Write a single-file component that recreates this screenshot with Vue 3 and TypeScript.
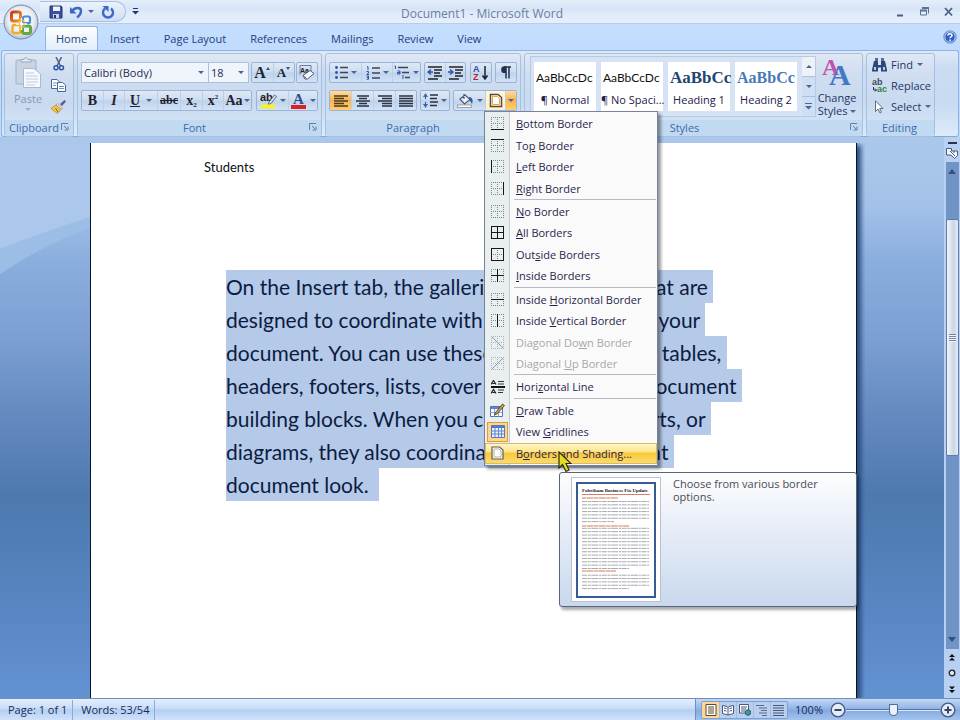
<script setup lang="ts">
import { ref } from 'vue'

type BorderLine = 'top' | 'bottom' | 'left' | 'right' | 'h' | 'v' | 'down' | 'up'

interface MenuItem {
  before: string
  key: string
  after: string
  icon: 'grid' | 'rule' | 'draw' | 'view' | 'page'
  lines?: BorderLine[]
  disabled?: boolean
  checked?: boolean
  active?: boolean
  separated?: boolean
}

const tabs = ['Home', 'Insert', 'Page Layout', 'References', 'Mailings', 'Review', 'View']
const activeTab = ref('Home')

const menu: MenuItem[] = [
  { before: '', key: 'B', after: 'ottom Border', icon: 'grid', lines: ['bottom'] },
  { before: 'To', key: 'p', after: ' Border', icon: 'grid', lines: ['top'] },
  { before: '', key: 'L', after: 'eft Border', icon: 'grid', lines: ['left'] },
  { before: '', key: 'R', after: 'ight Border', icon: 'grid', lines: ['right'] },
  { before: '', key: 'N', after: 'o Border', icon: 'grid', lines: [], separated: true },
  { before: '', key: 'A', after: 'll Borders', icon: 'grid', lines: ['top', 'bottom', 'left', 'right', 'h', 'v'] },
  { before: 'Out', key: 's', after: 'ide Borders', icon: 'grid', lines: ['top', 'bottom', 'left', 'right'] },
  { before: '', key: 'I', after: 'nside Borders', icon: 'grid', lines: ['h', 'v'] },
  { before: 'Inside ', key: 'H', after: 'orizontal Border', icon: 'grid', lines: ['h'], separated: true },
  { before: 'Inside ', key: 'V', after: 'ertical Border', icon: 'grid', lines: ['v'] },
  { before: 'Diagonal Do', key: 'w', after: 'n Border', icon: 'grid', lines: ['down'], disabled: true },
  { before: 'Diagonal ', key: 'U', after: 'p Border', icon: 'grid', lines: ['up'], disabled: true },
  { before: 'Hori', key: 'z', after: 'ontal Line', icon: 'rule', separated: true },
  { before: '', key: 'D', after: 'raw Table', icon: 'draw', separated: true },
  { before: 'View ', key: 'G', after: 'ridlines', icon: 'view', checked: true },
  { before: 'B', key: 'o', after: 'rders and Shading...', icon: 'page', active: true },
]

const linePaths: Record<BorderLine, string> = {
  top: 'M0 .5H13',
  bottom: 'M0 12.5H13',
  left: 'M.5 0V13',
  right: 'M12.5 0V13',
  h: 'M0 6.5H13',
  v: 'M6.5 0V13',
  down: 'M1 1L12 12',
  up: 'M1 12L12 1',
}

const styles = [
  { sample: 'AaBbCcDc', name: '¶ Normal', kind: 'body' },
  { sample: 'AaBbCcDc', name: '¶ No Spaci...', kind: 'body' },
  { sample: 'AaBbCc', name: 'Heading 1', kind: 'h1' },
  { sample: 'AaBbCc', name: 'Heading 2', kind: 'h2' },
]

const lines = [
  'On the Insert tab, the galleries include items that are',
  'designed to coordinate with the overall look of your',
  'document. You can use these galleries to insert tables,',
  'headers, footers, lists, cover pages, and other document',
  'building blocks. When you create pictures, charts, or',
  'diagrams, they also coordinate with your current',
  'document look. ',
]

const thumbRows = Array.from({ length: 27 }, (_, i) => i).filter((i) => i !== 7 && i !== 21)
const font = ref('Calibri (Body)')
const size = ref('18')
const zoom = ref(50)
</script>

<template>
  <div class="word">
    <header class="titlebar">
      <div class="qat">
        <button class="plain" aria-label="Save">
          <svg width="14" height="14" viewBox="0 0 14 14"><path d="M1 1H12L13 2V13H1Z" fill="#3a4fa3" stroke="#27356f" /><path d="M4 1.500H11V6H4Z" fill="#eef3ff" /><path d="M4 9H10V13H4Z" fill="#c9d4ef" /><path d="M5 10H7V13H5Z" fill="#27356f" /></svg>
        </button>
        <button class="plain" aria-label="Undo">
          <svg width="13" height="14" viewBox="0 0 13 14"><path d="M2 6C5 2 11 2 11 6C11 9 9 11 7 12.500" fill="none" stroke="#3f68c4" stroke-width="2.400" /><path d="M0 2V8.500H6.500Z" fill="#3f68c4" /></svg>
        </button>
        <i class="arrow" />
        <button class="plain" aria-label="Repeat">
          <svg width="14" height="14" viewBox="0 0 14 14"><path d="M4 3.500A5 5 0 1 0 10 3.500" fill="none" stroke="#3f68c4" stroke-width="2.400" /><path d="M1.500 1H7.500V7Z" fill="#3f68c4" /></svg>
        </button>
      </div>
      <button class="plain more" aria-label="Customize toolbar">
        <svg width="7" height="7" viewBox="0 0 7 7"><path d="M1 .5H6" stroke="#223a66" /><path d="M0 3H7L3.500 6.500Z" fill="#223a66" /></svg>
      </button>
      <h1>Document1 - Microsoft Word</h1>
      <div class="window-buttons">
        <button class="plain" aria-label="Minimize"><svg width="11" height="11" viewBox="0 0 11 11"><path d="M2 9.500H8" stroke="#4c5f80" stroke-width="2" /></svg></button>
        <button class="plain" aria-label="Restore"><svg width="11" height="11" viewBox="0 0 11 11"><path d="M3 2.500H9.500V7.500M1.500 4.500H7.500V9H1.500Z" fill="none" stroke="#5d7192" /><path d="M1 4.500H8M3 2H10" stroke="#5d7192" stroke-width="2" /></svg></button>
        <button class="plain" aria-label="Close"><svg width="11" height="11" viewBox="0 0 11 11"><path d="M2 2L9 9.500M9 2L2 9.500" stroke="#4c5f80" stroke-width="1.800" /></svg></button>
      </div>
    </header>

    <button class="orb" aria-label="Office menu">
      <svg width="36" height="38" viewBox="0 0 36 38">
        <defs>
          <radialGradient id="orb" cx=".5" cy=".45" r=".55"><stop offset="0" stop-color="#fff" /><stop offset=".7" stop-color="#e9edf3" /><stop offset="1" stop-color="#aebbd0" /></radialGradient>
          <linearGradient id="orbRed" x2="1" y2="1"><stop offset="0" stop-color="#c93b12" /><stop offset="1" stop-color="#f29a2c" /></linearGradient>
        </defs>
        <circle cx="18" cy="19" r="17" fill="url(#orb)" stroke="#7688a8" />
        <g fill="none" stroke-width="3">
          <rect x="8.500" y="9" width="9" height="9" rx="2" stroke="url(#orbRed)" />
          <rect x="20" y="13.500" width="7" height="6.500" rx="1.500" stroke="#4b8fd0" stroke-width="2.200" />
          <rect x="9.500" y="22" width="8" height="8" rx="2" stroke="#f0ad27" stroke-width="2.400" />
          <rect x="19.500" y="23" width="8" height="7.500" rx="2" stroke="#62a744" />
          <path d="M18.500 15V27M13 21H24" stroke="#fff" stroke-width="1.300" />
          <path d="M16.500 17.500H21V24H16.500Z" stroke="#f2c04a" stroke-width="1" />
        </g>
      </svg>
    </button>

    <nav class="tabs">
      <button v-for="t in tabs" :key="t" :class="['tab', { on: t === activeTab }]" @click="activeTab = t">{{ t }}</button>
      <button class="plain help" aria-label="Help">
        <svg width="14" height="14" viewBox="0 0 14 14"><circle cx="7" cy="7" r="6.300" fill="#2b5fc4" stroke="#8aa7d8" /><circle cx="7" cy="7" r="5.200" fill="none" stroke="#dce8fb" stroke-width=".8" /><path d="M5 5.500C5 3.300 9 3.300 9 5.400C9 6.800 7 6.700 7 8.300M7 9.500V11" fill="none" stroke="#fff" stroke-width="1.500" /></svg>
      </button>
    </nav>

    <section class="ribbon">
      <div class="group">
        <div class="content clip">
          <button class="plain paste" disabled>
            <svg width="27" height="32" viewBox="0 0 27 32"><rect x="1" y="3" width="20" height="24" rx="1" fill="#c9d4e3" stroke="#a3b2c8" /><path d="M6 5V2.500H9C9 0 13 0 13 2.500H16V5Z" fill="#e3e9f1" stroke="#98a8bf" /><path d="M8.500 11.500H19L25.500 17V30.500H8.500Z" fill="#f6f9fd" stroke="#a9b8cd" /><path d="M11 16H19M11 19H23M11 22H23M11 25H23M11 28H20" stroke="#c0ccdd" /></svg>
            <span>Paste</span>
            <i class="arrow dim" />
          </button>
          <div class="clip-side">
            <button class="plain" aria-label="Cut"><svg width="14" height="14" viewBox="0 0 14 14"><path d="M4 0L8.500 9M9.500 0L5 9" stroke="#4a5f86" stroke-width="1.500" /><circle cx="4" cy="10.800" r="2" fill="none" stroke="#2b56a8" stroke-width="1.500" /><circle cx="9.500" cy="10.800" r="2" fill="none" stroke="#2b56a8" stroke-width="1.500" /></svg></button>
            <button class="plain" aria-label="Copy"><svg width="15" height="13" viewBox="0 0 15 13"><path d="M.5 .5H6L8.500 3V9.500H.5Z" fill="#fff" stroke="#48659c" /><path d="M6.500 3.500H11.500L14.500 6V12.500H6.500Z" fill="#fff" stroke="#48659c" /><path d="M2 4H6M2 6.500H5M8 7.500H13M8 9.500H13" stroke="#6f8fc5" /></svg></button>
            <button class="plain" aria-label="Format Painter"><svg width="15" height="14" viewBox="0 0 15 14"><path d="M9 4L13.500 0L15 1.500L11 6Z" fill="#5f5a8f" /><path d="M6.500 3.500L11.500 8L10 9.500L5 5Z" fill="#e9e9ee" stroke="#777" stroke-width=".6" /><path d="M5 5L10 9.500L6.500 13.500L0 8.500Z" fill="#f2cb4c" stroke="#b78a22" stroke-width=".8" /><path d="M4.500 8L7 12" stroke="#8a661b" /></svg></button>
          </div>
        </div>
        <div class="caption"><span>Clipboard</span><svg class="launch" width="8" height="8" viewBox="0 0 8 8"><path d="M.5 7V.5H7M3 3L6 6M7 3.500V7H3.500" fill="none" stroke="#5f7ea8" /></svg></div>
      </div>

      <div class="group">
        <div class="content rows">
          <div class="row">
            <div class="combo">
              <input v-model="font" class="font-box" aria-label="Font" /><button class="plain drop" aria-label="Font list"><i class="arrow" /></button>
              <input v-model="size" class="size-box" aria-label="Font size" /><button class="plain drop" aria-label="Size list"><i class="arrow" /></button>
            </div>
            <div class="box">
              <button class="serif big w21" aria-label="Grow font">A<i class="mark up" /></button>
              <button class="serif w21 mid" aria-label="Shrink font">A<i class="mark" /></button>
            </div>
            <div class="box">
              <button class="w20" aria-label="Clear formatting"><svg width="16" height="15" viewBox="0 0 16 15"><text x="1" y="8" class="tiny">Aa</text><path d="M1 9.500V.5H12V6" fill="none" stroke="#6a7da0" /><path d="M4 10.500L11 5.500L15 8.500L8.500 14H6Z" fill="#f6f7fb" stroke="#4d5f80" /><path d="M4 10.500L7.500 13.500" stroke="#4d5f80" /></svg></button>
            </div>
          </div>
          <div class="row">
            <div class="box">
              <button class="serif w21 strong">B</button>
              <button class="serif w21 italic">I</button>
              <button class="serif w33 under"><u>U</u><i class="arrow" /></button>
              <button class="serif w23 strike"><s>abc</s></button>
              <button class="serif w22 script">x<small class="low">2</small></button>
              <button class="serif w21 script">x<small class="high">2</small></button>
              <button class="serif w28 case">Aa<i class="arrow" /></button>
            </div>
            <div class="box">
              <button class="w31" aria-label="Highlight"><svg width="17" height="17" viewBox="0 0 17 17"><text x="0" y="9" class="ab">ab</text><path d="M9 10L14.500 3L16.500 4.500L11 11.500L8 12.500Z" fill="#d9dde6" stroke="#54617c" stroke-width=".9" /><rect x="1" y="12.500" width="14" height="4" fill="#f8f22a" /></svg><i class="arrow" /></button>
              <button class="w29" aria-label="Font colour"><svg width="16" height="17" viewBox="0 0 16 17"><text x="2" y="12" class="big-a">A</text><rect x="0" y="13" width="15" height="4" fill="#df1f26" /></svg><i class="arrow" /></button>
            </div>
          </div>
        </div>
        <div class="caption"><span>Font</span><svg class="launch" width="8" height="8" viewBox="0 0 8 8"><path d="M.5 7V.5H7M3 3L6 6M7 3.500V7H3.500" fill="none" stroke="#5f7ea8" /></svg></div>
      </div>

      <div class="group">
        <div class="content rows">
          <div class="row">
            <div class="box">
              <button class="w31" aria-label="Bullets"><svg width="13" height="13" viewBox="0 0 13 13"><path d="M5 1.500H13M5 6.500H13M5 11.500H13" stroke="#3d4658" stroke-width="1.400" /><g fill="#2c50a5"><circle cx="1.500" cy="1.500" r="1.400" /><circle cx="1.500" cy="6.500" r="1.400" /><circle cx="1.500" cy="11.500" r="1.400" /></g></svg><i class="arrow" /></button>
              <button class="w31" aria-label="Numbering"><svg width="14" height="14" viewBox="0 0 14 14"><path d="M6 2H14M6 7H14M6 12H14" stroke="#3d4658" stroke-width="1.400" /><path d="M1 .8H2V4M.5 5.500H2.500V7L.8 8.500H3M.5 10H2.500V13.200H.5M1 11.500H2.500" fill="none" stroke="#2c50a5" /></svg><i class="arrow" /></button>
              <button class="w28" aria-label="Multilevel list"><svg width="16" height="15" viewBox="0 0 16 15"><path d="M4 2.500H14M8 7.500H15M11 12.500H16" stroke="#3d4658" stroke-width="1.400" /><path d="M.5 1H1.500V4M3.500 6H6V9H3.500V7.500H6M9 10V14" fill="none" stroke="#2c50a5" /></svg><i class="arrow" /></button>
            </div>
            <div class="box">
              <button class="w20" aria-label="Decrease indent"><svg width="16" height="14" viewBox="0 0 16 14"><path d="M1 1H15M7 4H15M7 7H13M7 10H15M1 13H11" stroke="#1d222c" stroke-width="1.600" /><path d="M6 6H2M4 3.500L1 6L4 8.500" fill="none" stroke="#2c50a5" stroke-width="1.400" /></svg></button>
              <button class="w20" aria-label="Increase indent"><svg width="16" height="14" viewBox="0 0 16 14"><path d="M1 1H15M7 4H15M7 7H13M7 10H15M1 13H11" stroke="#1d222c" stroke-width="1.600" /><path d="M0 6H4M2 3.500L5 6L2 8.500" fill="none" stroke="#2c50a5" stroke-width="1.400" /></svg></button>
            </div>
            <div class="box">
              <button class="w20" aria-label="Sort"><svg width="16" height="17" viewBox="0 0 16 17"><text x="0" y="8" class="sort-a">A</text><text x="0" y="16" class="sort-z">Z</text><path d="M12 2V15M9.500 11.500L12 15L14.500 11.500" fill="none" stroke="#1d222c" stroke-width="1.500" /></svg></button>
            </div>
            <div class="box">
              <button class="w20" aria-label="Show marks"><svg width="12" height="13" viewBox="0 0 12 13"><path d="M6 .5V12.500M9 .5V12.500M4 1H11" stroke="#22304c" stroke-width="1.500" /><path d="M6 .3H4.500A3.200 3.200 0 0 0 4.500 7H6Z" fill="#22304c" /></svg></button>
            </div>
          </div>
          <div class="row">
            <div class="box">
              <button class="w21 hot" aria-label="Align left"><svg width="14" height="12" viewBox="0 0 14 12"><path d="M0 1H14M0 3.500H10M0 6H14M0 8.500H10M0 11H14" stroke="#4a3a1c" stroke-width="1.500" /></svg></button>
              <button class="w22" aria-label="Center"><svg width="14" height="12" viewBox="0 0 14 12"><path d="M1 1H13M3 3.500H11M0 6H14M3 8.500H11M1 11H13" stroke="#2b3242" stroke-width="1.500" /></svg></button>
              <button class="w22" aria-label="Align right"><svg width="14" height="12" viewBox="0 0 14 12"><path d="M0 1H14M4 3.500H14M0 6H14M4 8.500H14M4 11H14" stroke="#2b3242" stroke-width="1.500" /></svg></button>
              <button class="w21" aria-label="Justify"><svg width="14" height="12" viewBox="0 0 14 12"><path d="M0 1H14M0 3.500H14M0 6H14M0 8.500H14M0 11H14" stroke="#2b3242" stroke-width="1.500" /></svg></button>
            </div>
            <div class="box">
              <button class="w28" aria-label="Line spacing"><svg width="15" height="15" viewBox="0 0 15 15"><path d="M7 2H15M7 5.500H14M7 9H15M7 12.500H14" stroke="#2b3242" stroke-width="1.500" /><path d="M2.500 1V14" stroke="#2c50a5" stroke-dasharray="5 3" /><path d="M0 4L2.500 0L5 4ZM0 11L2.500 15L5 11Z" fill="#3d66b4" /></svg><i class="arrow" /></button>
            </div>
            <div class="box">
              <button class="w31" aria-label="Shading"><svg width="17" height="15" viewBox="0 0 17 15"><path d="M7 1V6M3 6L8 2L13 6.500L7.500 11Z" fill="#eef3fb" stroke="#48597a" stroke-width="1.200" /><path d="M12 4C15 4 16.500 7 15 11L12.500 7Z" fill="#33589e" /><rect x=".5" y="12" width="14" height="2.500" fill="#fff" stroke="#8c8c8c" stroke-width=".8" /></svg><i class="arrow" /></button>
              <button class="w20 warm" aria-label="Borders"><svg width="14" height="15" viewBox="0 0 14 15"><path d="M1.500 1.500H9L12.500 4.500V13.500H1.500Z" fill="#fff" stroke="#5b4a2f" stroke-width="1.500" /><path d="M3.500 3.500H8.500L10.500 5.500V11.500H3.500Z" fill="none" stroke="#e6a640" /></svg></button>
              <button class="w11 hot" aria-label="Border options"><i class="arrow" /></button>
            </div>
          </div>
        </div>
        <div class="caption"><span class="shifted">Paragraph</span></div>
      </div>

      <div class="group">
        <div class="content styles">
          <div class="gallery">
            <button v-for="(s, i) in styles" :key="i" class="style-card">
              <span :class="['sample', s.kind]">{{ s.sample }}</span>
              <span class="style-name">{{ s.name }}</span>
            </button>
            <div class="gallery-nav">
              <button aria-label="Previous styles" class="off"><i class="arrow flip" /></button>
              <button aria-label="Next styles"><i class="arrow" /></button>
              <button aria-label="All styles"><svg width="7" height="7" viewBox="0 0 7 7"><path d="M0 .5H7" stroke="#4b6591" /><path d="M0 3H7L3.500 6.500Z" fill="#4b6591" /></svg></button>
            </div>
          </div>
          <button class="plain change">
            <svg width="30" height="32" viewBox="0 0 30 32"><text x="0" y="19" class="a-pink">A</text><text x="7" y="29" class="a-blue">A</text></svg>
            <span>Change</span>
            <span>Styles <i class="arrow" /></span>
          </button>
        </div>
        <div class="caption"><span class="shifted-less">Styles</span><svg class="launch" width="8" height="8" viewBox="0 0 8 8"><path d="M.5 7V.5H7M3 3L6 6M7 3.500V7H3.500" fill="none" stroke="#5f7ea8" /></svg></div>
      </div>

      <div class="group">
        <div class="content editing">
          <button class="plain"><svg width="15" height="14" viewBox="0 0 15 14"><path d="M2 3H6V7H9V3H13L15 12V13.500H9V9.500H6V13.500H0V12Z" fill="#2b4778" /><path d="M3 0H6V3H3ZM9 0H12V3H9Z" fill="#4f6ea3" /><path d="M2 9H4V12H2ZM11 9H13V12H11Z" fill="#b9cbe8" /></svg><span>Find</span><i class="arrow" /></button>
          <button class="plain"><svg width="15" height="15" viewBox="0 0 15 15"><text x="0" y="7" class="rep">ab</text><text x="5" y="14" class="rep green">ac</text><path d="M1.500 9V12H4.500M3 10.500L4.500 12L3 13.500" fill="none" stroke="#223a66" /></svg><span>Replace</span></button>
          <button class="plain"><svg width="15" height="14" viewBox="0 0 15 14"><path d="M3.500 .8V11.500L6 9L8 13L9.500 12.200L7.700 8.500H11Z" fill="#fff" stroke="#5e6c85" /></svg><span>Select</span><i class="arrow" /></button>
        </div>
        <div class="caption"><span>Editing</span></div>
      </div>
    </section>

    <main class="workspace">
      <svg class="swoosh" viewBox="0 0 90 140" preserveAspectRatio="none"><path d="M0 0H90V91Q45 107 0 137Z" fill="#9bbde6" /><path d="M0 0H90V80Q40 96 0 112Z" fill="#abc8ec" /></svg>
      <article class="page">
        <p class="header-text">Students</p>
        <p class="body-text">
          <span v-for="l in lines" :key="l" class="line"><mark>{{ l }}&nbsp;</mark></span>
        </p>
      </article>
      <aside class="scroll">
        <span class="split" />
        <button class="plain" aria-label="Ruler"><svg width="12" height="12" viewBox="0 0 12 12"><path d="M.5 1.500H5.500V4H11.500V8.500L8.500 11.500L5 8H.5Z" fill="#f5f8fd" stroke="#4a5c7d" /><path d="M4 4L9 9M8 4V6" stroke="#4a5c7d" /></svg></button>
        <div class="track">
          <button class="plain end" aria-label="Scroll up"><i class="arrow flip" /></button>
          <div class="handle"><span /></div>
          <button class="plain end" aria-label="Scroll down"><i class="arrow" /></button>
        </div>
        <button class="plain jump" aria-label="Previous page"><svg width="6" height="7" viewBox="0 0 6 7"><path d="M0 3L3 0L6 3ZM0 6.500L3 3.500L6 6.500Z" fill="#111" /></svg></button>
        <button class="plain jump" aria-label="Browse object"><svg width="8" height="8" viewBox="0 0 8 8"><circle cx="4" cy="4" r="2.800" fill="#dfe6f0" stroke="#222" stroke-width="1.300" /></svg></button>
        <button class="plain jump" aria-label="Next page"><svg width="6" height="7" viewBox="0 0 6 7"><path d="M0 .5H6L3 3.500ZM0 4H6L3 7Z" fill="#111" /></svg></button>
      </aside>
    </main>

    <footer class="status">
      <span class="cell">Page: 1 of 1</span>
      <span class="cell">Words: 53/54</span>
      <div class="right">
        <div class="views">
          <button class="sel" aria-label="Print layout"><svg width="12" height="12" viewBox="0 0 12 12"><path d="M1 .5H11V11.500H1Z" fill="#fff" stroke="#5b4a2f" /><path d="M3 3H9M3 5H9M3 7H9M3 9H9" stroke="#5b4a2f" /></svg></button>
          <button aria-label="Reading"><svg width="12" height="12" viewBox="0 0 12 12"><path d="M.5 1.500L5 2.500L6 3.500L7 2.500L11.500 1.500V9.500L6 11L.5 9.500Z" fill="#fff" stroke="#49577a" /><path d="M6 3V11M2 4L4.500 4.500M2 6.500L4.500 7M7.500 4.500L10 4M7.500 7L10 6.500" stroke="#49577a" /></svg></button>
          <button aria-label="Web layout"><svg width="12" height="12" viewBox="0 0 12 12"><path d="M.5 .5H9.500V9H.5Z" fill="#fff" stroke="#49577a" /><path d="M2 3H8M2 5H7M2 7H6" stroke="#49577a" /><circle cx="9" cy="8.500" r="2.800" fill="#3f9a8a" stroke="#2c5f8c" /></svg></button>
          <button aria-label="Outline"><svg width="12" height="12" viewBox="0 0 12 12"><path d="M0 1.500H8M3 4H11M5 6.500H11M3 9H11M6 11.500H11" stroke="#5d6b86" /></svg></button>
          <button aria-label="Draft"><svg width="12" height="12" viewBox="0 0 12 12"><path d="M0 1.500H11M0 4H11M0 6.500H11M0 9H11M0 11.500H11" stroke="#49577a" /></svg></button>
        </div>
        <span class="pct">100%</span>
        <button class="plain" aria-label="Zoom out"><svg width="16" height="16" viewBox="0 0 16 16"><circle cx="8" cy="8" r="6.800" fill="#e4edf9" stroke="#44597f" stroke-width="1.300" /><path d="M4.500 8H11.500" stroke="#33476b" stroke-width="2" /></svg></button>
        <input v-model="zoom" type="range" min="0" max="100" aria-label="Zoom" />
        <button class="plain" aria-label="Zoom in"><svg width="16" height="16" viewBox="0 0 16 16"><circle cx="8" cy="8" r="6.800" fill="#e4edf9" stroke="#44597f" stroke-width="1.300" /><path d="M4.500 8H11.500M8 4.500V11.500" stroke="#33476b" stroke-width="2" /></svg></button>
      </div>
    </footer>

    <div class="menu">
      <template v-for="m in menu" :key="m.before + m.key + m.after">
        <hr v-if="m.separated" />
        <button :class="['entry', { active: m.active }]" :disabled="m.disabled">
          <span :class="['glyph', { checked: m.checked }]">
            <svg v-if="m.icon === 'grid'" width="13" height="13" viewBox="0 0 13 13" shape-rendering="crispEdges">
              <path d="M0 .5H13M0 12.500H13M0 6.500H13M.5 0V13M6.500 0V13M12.500 0V13" fill="none" :stroke="m.disabled ? '#a9b2c0' : '#7d8694'" stroke-dasharray="1 1" />
              <path v-for="l in m.lines" :key="l" :d="linePaths[l]" :stroke="m.disabled ? '#8f9aac' : '#15181e'" />
            </svg>
            <svg v-else-if="m.icon === 'rule'" width="14" height="14" viewBox="0 0 14 14"><path d="M0 7H14" stroke="#111" stroke-width="2" /><path d="M0 4.500L2.500 .5L5 4.500M1.500 3.500H4M0 13.500L2.500 9.500L5 13.500M1.500 12.500H4" fill="none" stroke="#222" stroke-width="1.200" /><path d="M7 1.500H13M7 4H13M7 10H13M7 12.500H12" stroke="#333" /></svg>
            <svg v-else-if="m.icon === 'draw'" width="15" height="15" viewBox="0 0 15 15"><path d="M.5 3.500H12.500V13.500H.5Z" fill="#fff" stroke="#4e74b8" /><path d="M1 4H12V6H1Z" fill="#5c85cc" /><path d="M.5 9.500H12.500M4.500 6V13.500M8.500 6V13.500" stroke="#8aa8da" /><path d="M5 10L12.500 1L14.500 2.500L7 11L4.500 12Z" fill="#c99a5c" stroke="#4b3519" stroke-width=".8" /></svg>
            <svg v-else-if="m.icon === 'view'" width="14" height="13" viewBox="0 0 14 13"><path d="M.5 .5H13.500V12.500H.5Z" fill="#eaf1fc" stroke="#5379bd" /><path d="M1 1H13V3H1Z" fill="#4c78c4" /><path d="M.5 6H13.500M.5 9H13.500M4 .5V12.500M7.500 .5V12.500M10.500 .5V12.500" stroke="#5d86cd" /></svg>
            <svg v-else width="13" height="14" viewBox="0 0 13 14"><path d="M1 1H8.500L12 4V13H1Z" fill="#fff" stroke="#5f5c55" stroke-width="1.200" /><path d="M3 3H8L10 5V11H3Z" fill="none" stroke="#b7b09f" /></svg>
          </span>
          <span class="text">{{ m.before }}<u>{{ m.key }}</u>{{ m.after }}</span>
        </button>
      </template>
    </div>

    <div class="tip" role="tooltip">
      <svg width="90" height="125" viewBox="0 0 90 125">
        <rect x=".5" y=".5" width="89" height="124" fill="#fff" stroke="#b9c2d0" />
        <rect x="6" y="6" width="78" height="114" fill="#fff" stroke="#3a5a92" stroke-width="2" />
        <text x="11" y="15" class="thumb-title">Fabrikam Business Fix Update</text>
        <path d="M11 17.500H79" stroke="#c0604e" stroke-width=".8" />
        <path d="M11 21H47M11 49H58M11 94H45" stroke="#e3a78c" stroke-width="1.300" stroke-dasharray="4 .5 7 .6" />
        <path v-for="r in thumbRows" :key="r" :d="`M11 ${24.5 + r * 3.35}H${r === 6 ? 43 : r === 20 ? 58 : r === 26 ? 58 : 78}`" stroke="#a6a9b0" stroke-dasharray="5 .8 3 .6 7 .8 2 .6" />
      </svg>
      <p>Choose from various border options.</p>
    </div>

    <svg class="pointer" width="14" height="22" viewBox="0 0 14 22"><path d="M1 1V17L4.500 13.500L8 20.500L11 19L8 12.500H13Z" fill="#e3dc22" stroke="#2a2a10" stroke-width="1.200" /></svg>
  </div>
</template>

<style>
body {
  margin: 0;
  overflow: hidden;
}
</style>

<style scoped>
* {
  box-sizing: border-box;
}

.word {
  position: relative;
  display: flex;
  flex-direction: column;
  height: 100vh;
  font: 11px/13px "Open Sans", "Noto Sans", sans-serif;
  color: #1f3566;
  background: #bfdbff;
}

button {
  font: inherit;
  color: inherit;
  margin: 0;
  padding: 0;
  border: 0;
  background: none;
  white-space: nowrap;
}

.plain {
  display: flex;
  align-items: center;
  justify-content: center;
}

svg {
  display: block;
  flex: none;
}

.arrow {
  display: inline-block;
  flex: none;
  width: 0;
  height: 0;
  border: 3px solid transparent;
  border-top-color: #4b6591;
  border-bottom-width: 0;
}

.arrow.dim {
  border-top-color: #a4afc0;
}

.arrow.flip {
  transform: rotate(180deg);
}

.titlebar {
  display: flex;
  align-items: center;
  height: 24px;
  padding: 0 5px 0 40px;
  background: linear-gradient(#e4eefb, #d6e4f6 40%, #dfeafa 55%, #e6f0fc);
  border-bottom: 1px solid #b7cdec;
}

.qat {
  display: flex;
  align-items: center;
  gap: 7px;
  height: 21px;
  width: 86px;
  padding-left: 9px;
  border: 1px solid #a9bfdf;
  border-left: 0;
  border-radius: 0 11px 11px 0;
  background: linear-gradient(#eaf2fd, #cfdff5);
}

.qat .arrow {
  margin-left: -2px;
}

.more {
  margin-left: 5px;
  width: 8px;
}

h1 {
  flex: 1;
  margin: 0;
  padding: 4px 70px 0 0;
  text-align: center;
  font-size: 12px;
  line-height: 16px;
  font-weight: 400;
  color: #6b7d9e;
}

.window-buttons {
  display: flex;
  gap: 13px;
  padding-right: 1px;
}

.orb {
  position: absolute;
  left: 3px;
  top: 3px;
  z-index: 2;
}

.tabs {
  display: flex;
  align-items: flex-end;
  height: 26px;
  padding: 0 3px 0 45px;
  background: linear-gradient(#c6dffd, #bfdbff);
}

.tab {
  height: 24px;
  padding: 0 11px;
  color: #20427c;
  border: 1px solid transparent;
  border-bottom: 0;
}

.tab.on {
  padding: 0 10px;
  background: linear-gradient(#fdfeff, #e3edfa);
  border-color: #8db2e3;
  border-radius: 3px 3px 0 0;
}

.help {
  margin: 0 0 6px auto;
}

.ribbon {
  display: grid;
  grid-template-columns: 70px 245px 196px 1fr 69px;
  gap: 3px;
  height: 87px;
  margin: 0 1px;
  padding: 2px 23px 3px 2px;
  border: 1px solid #8db2e3;
  border-bottom-color: #7fb0c9;
  border-radius: 3px;
  background: linear-gradient(#dfe9f6, #cbdcf2 20%, #c7daf1 60%, #dcebfb);
}

.group {
  display: flex;
  flex-direction: column;
  min-width: 0;
  border: 1px solid #a6c0e0;
  border-radius: 3px;
  background: linear-gradient(#dfe8f4, #cfddf0 25%, #c9daf0 60%, #dae8f8);
}

.content {
  flex: 1;
  min-height: 0;
}

.caption {
  display: flex;
  align-items: center;
  height: 16px;
  padding: 0 4px 2px 2px;
  background: #c2d9f2;
  color: #3e6aaa;
}

.caption span {
  flex: 1;
  text-align: center;
}

.caption .shifted {
  padding-right: 18px;
}

.caption .shifted-less {
  padding-right: 8px;
}

.clip {
  display: flex;
  justify-content: space-between;
  padding: 3px 7px 0 9px;
}

.paste {
  flex-direction: column;
  justify-content: flex-start;
  gap: 3px;
  color: #8d98aa;
}

.clip-side {
  display: flex;
  flex-direction: column;
  gap: 8px;
}

.rows {
  display: flex;
  flex-direction: column;
  gap: 7px;
  padding: 8px 3px 0;
}

.row {
  display: flex;
  justify-content: space-between;
  height: 21px;
}

.box {
  display: flex;
  border: 1px solid #9ab4d8;
  border-radius: 2px;
  background: linear-gradient(#dfe9f6, #ccdcf0 48%, #bfd3ec 52%, #d3e2f5);
}

.box button {
  position: relative;
  display: flex;
  align-items: center;
  justify-content: center;
  gap: 3px;
  color: #1c2333;
}

.box button + button {
  border-left: 1px solid #bccfe8;
}

.w11 { width: 11px; }
.w20 { width: 20px; }
.w21 { width: 21px; }
.w22 { width: 22px; }
.w23 { width: 23px; }
.w28 { width: 28px; }
.w29 { width: 29px; }
.w31 { width: 31px; }
.w33 { width: 33px; }

.box .serif {
  font-family: "Liberation Serif", serif;
  font-weight: 700;
  font-size: 14px;
}

.box .big {
  font-size: 16px;
}

.box .mid {
  font-size: 13px;
}

.box .italic {
  font-style: italic;
}

.box .strike {
  font-size: 12px;
}

.box .script {
  gap: 0;
}

.box .under {
  gap: 6px;
}

.box .case {
  gap: 1px;
}

.box small {
  font-size: 7px;
  line-height: 8px;
}

.low {
  padding-top: 8px;
}

.high {
  padding-bottom: 8px;
}

.mark {
  align-self: flex-start;
  margin: 4px 0 0 -3px;
  border: 2px solid transparent;
  border-top: 3px solid #33528c;
  border-bottom: 0;
}

.mark.up {
  transform: rotate(180deg);
}

.box .hot {
  background: linear-gradient(#fddca0, #fbb350 50%, #fccf73);
}

.box .warm {
  background: linear-gradient(#fff6dc, #fff0c4);
}

.combo {
  display: flex;
  width: 168px;
  border: 1px solid #abc1de;
  background: #f0f5fc;
}

.combo input {
  min-width: 0;
  border: 0;
  padding: 0 0 0 2px;
  background: none;
  font: inherit;
  color: #1d2c4e;
  outline: 0;
}

.font-box {
  flex: 1;
}

.combo .size-box {
  width: 26px;
  border-left: 1px solid #abc1de;
}

.drop {
  width: 14px;
}

.tiny {
  font: 700 7px "Liberation Sans", sans-serif;
  fill: #222;
}

.ab {
  font: 700 11px "Liberation Sans", sans-serif;
  fill: #222;
}

.big-a {
  font: 700 15px "Liberation Serif", serif;
  fill: #2d4f8e;
}

.sort-a,
.sort-z {
  font: 700 9px "Liberation Sans", sans-serif;
  fill: #2c50a5;
}

.sort-z {
  fill: #b3263a;
}

.styles {
  display: flex;
  justify-content: space-between;
  padding: 2px 5px 3px;
}

.gallery {
  display: flex;
  gap: 5px;
  flex: 1;
  max-width: 286px;
  min-width: 0;
  padding: 5px 0 5px 3px;
  border: 1px solid #b4cbe8;
  background: #d5e3f4;
}

.style-card {
  flex: 1;
  min-width: 0;
  display: flex;
  flex-direction: column;
  gap: 5px;
  padding: 6px 0 0;
  background: #fff;
  color: #23204c;
}

.sample {
  width: 100%;
  height: 20px;
  padding-left: 2px;
  text-align: left;
  font: 12px/20px Lato, sans-serif;
  color: #111;
}

.style-name {
  width: 100%;
  text-align: center;
}

.sample.h1 {
  font: 700 17px/20px "Liberation Serif", serif;
  color: #23456f;
}

.sample.h2 {
  font: 700 16px/20px "Liberation Serif", serif;
  color: #4a7ab5;
}

.gallery-nav {
  width: 13px;
  margin: -5px 0;
  display: grid;
  grid-template-rows: repeat(3, 1fr);
  gap: 1px;
  background: #a9c0df;
}

.gallery-nav button {
  display: flex;
  align-items: center;
  justify-content: center;
  background: #cfdff3;
}

.gallery-nav .off {
  background: #eef1f5;
}

.change {
  flex-direction: column;
  justify-content: flex-start;
  width: 40px;
  line-height: 13px;
}

.change svg {
  margin-bottom: 3px;
}

.change .arrow,
.editing .arrow {
  vertical-align: 2px;
}

.a-pink {
  font: 700 24px "Liberation Serif", serif;
  fill: #c252ae;
}

.a-blue {
  font: 700 30px "Liberation Serif", serif;
  fill: #4379c6;
}

.editing {
  display: flex;
  flex-direction: column;
  align-items: flex-start;
  gap: 6px;
  padding: 3px 0 0 5px;
}

.editing button {
  gap: 4px;
  height: 15px;
}

.rep {
  font: 700 9px "Liberation Sans", sans-serif;
  fill: #444c5c;
}

.green {
  fill: #2d8a3a;
}

.workspace {
  position: relative;
  flex: 1;
  min-height: 0;
  display: flex;
  background: linear-gradient(#abc8ec, #a4c2e9 12%, #8aaedd 22%, #7b9fd2 36%, #6389c0 50%, #4d79b0 64%, #5480ba 76%, #6392d3);
}

.swoosh {
  position: absolute;
  left: 0;
  top: 0;
  width: 90px;
  height: 140px;
}

.page {
  flex: 1;
  min-width: 0;
  margin: 6px 87px 0 90px;
  padding: 17px 0 0 113px;
  border: solid #0b1422;
  border-width: 0 1px;
  background: #fff;
  box-shadow: 4px 2px 5px #274a7d;
  font-family: Lato, "Open Sans", sans-serif;
  clip-path: inset(0 -8px 0 0);
}

.header-text {
  margin: 0 0 95px;
  font-size: 13px;
  line-height: 15px;
  color: #111;
}

.body-text {
  margin: 0 0 0 22px;
  font-size: 21px;
  color: #0b1c42;
}

.line {
  display: block;
  height: 33px;
  line-height: 33px;
  white-space: pre;
}

mark {
  display: inline-block;
  color: inherit;
  background: #b5c9e9;
}

.scroll {
  width: 16px;
  display: flex;
  flex-direction: column;
  align-items: center;
  padding: 5px 0 1px;
  background: #b8d0f2;
}

.split {
  width: 9px;
  height: 2px;
  margin-bottom: 3px;
  background: #24344f;
}

.track {
  flex: 1;
  display: flex;
  flex-direction: column;
  width: 13px;
  margin-top: 3px;
  background: #7194c6;
}

.end {
  height: 19px;
  width: 100%;
}

.end .arrow {
  border-width: 5px 4px 0;
  border-top-color: #33507f;
}

.handle {
  height: 237px;
  margin: 38px 0 auto;
  display: flex;
  align-items: center;
  justify-content: center;
  border: 1px solid #5f7ba8;
  border-radius: 2px;
  background: linear-gradient(90deg, #f2f5fa, #ccd6e4 60%, #e6ecf5);
}

.handle span {
  width: 7px;
  height: 8px;
  background: repeating-linear-gradient(#7286a6 0 1px, #f0f4fa 1px 2px);
}

.jump {
  height: 16px;
}

.status {
  display: flex;
  align-items: center;
  height: 22px;
  border-top: 1px solid #6f8fbd;
  background: linear-gradient(#e4eefb, #cbdff8 40%, #b5d0f3 55%, #cfe2fa);
  color: #182c58;
}

.cell {
  padding: 0 5px 0 8px;
  line-height: 20px;
  border-right: 1px solid #8fabd4;
}

.right {
  flex: none;
  display: flex;
  align-items: center;
  height: 100%;
  margin-left: auto;
  padding: 0 4px 0 5px;
  border-left: 1px solid #6f8fbd;
  background: linear-gradient(#c3d8f5, #92b5e6 45%, #84aae0 55%, #a5c4ee);
}

.views {
  display: flex;
  height: 18px;
  border: 1px solid #7f9fd0;
  border-radius: 2px;
  background: #b9cfee;
}

.views button {
  width: 17px;
  display: flex;
  align-items: center;
  justify-content: center;
}

.views button + button {
  border-left: 1px solid #a2bce2;
}

.views .sel {
  background: #fbd794;
}

.pct {
  padding: 0 7px;
}

.right input {
  appearance: none;
  width: 94px;
  height: 16px;
  margin: 0;
  background: linear-gradient(transparent 7px, #58729f 7px 8px, #dce9fa 8px 9px, transparent 9px);
}

.right input::-webkit-slider-thumb {
  appearance: none;
  width: 9px;
  height: 12px;
  border: 1px solid #4f6894;
  border-radius: 1px 1px 5px 5px;
  background: #e9f1fc;
}

.menu {
  position: absolute;
  left: 484px;
  top: 111px;
  z-index: 3;
  width: 174px;
  height: 355px;
  display: flex;
  flex-direction: column;
  padding: 1px 0;
  border: 1px solid #76839a;
  background: linear-gradient(90deg, #e9eeee 24px, #c3c9cf 24px 25px, #fafafa 25px);
  box-shadow: 3px 3px 3px #0006;
  color: #2a1f4d;
}

.menu hr {
  flex: none;
  width: 142px;
  height: 1px;
  margin: 0 1px 1px auto;
  border: 0;
  background: #b6bac2;
}

.entry {
  flex: 1;
  min-height: 0;
  display: flex;
  align-items: center;
  gap: 8px;
  padding-left: 2px;
  text-align: left;
}

.entry:disabled {
  color: #a7a7ab;
}

.entry.active {
  background: linear-gradient(#fff6cf, #fde68e 40%, #f9c93c 50%, #fbdc73);
  box-shadow: inset 0 0 0 1px #d9bb63;
}

.glyph {
  width: 21px;
  height: 20px;
  display: flex;
  align-items: center;
  justify-content: center;
}

.glyph.checked {
  border: 1px solid #e09a3c;
  background: #fbd592;
}

.tip {
  position: absolute;
  left: 559px;
  top: 472px;
  z-index: 4;
  width: 298px;
  height: 135px;
  display: flex;
  gap: 12px;
  padding: 4px 11px;
  border: 1px solid #56657c;
  border-radius: 3px;
  background: linear-gradient(#fdfdfe, #c9d8ee);
  box-shadow: 2px 3px 3px #0005;
  color: #4a4c52;
}

.tip p {
  margin: 0;
  width: 150px;
}

.thumb-title {
  font: 700 5px "Liberation Serif", serif;
  fill: #222;
}

.pointer {
  position: absolute;
  left: 558px;
  top: 451px;
  z-index: 5;
}
</style>
